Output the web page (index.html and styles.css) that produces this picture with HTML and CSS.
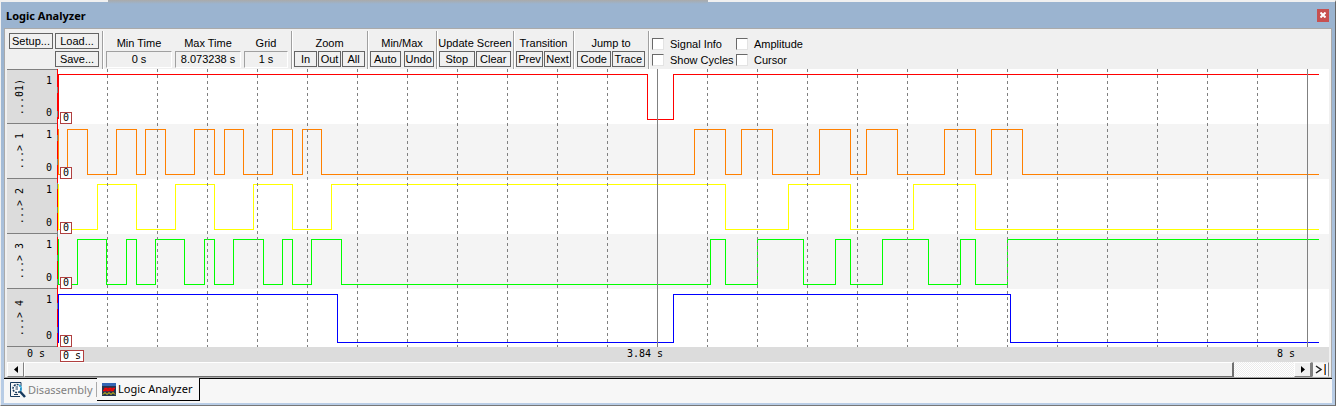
FILE: index.html
```html
<!DOCTYPE html>
<html lang="en">
<head>
<meta charset="utf-8">
<title>Logic Analyzer</title>
<link rel="stylesheet" href="styles.css">
</head>
<body>
<div class="window">
  <header class="titlebar">
    <h1>Logic Analyzer</h1>
    <button class="close" aria-label="Close"><svg width="6" height="6" viewBox="0 0 6 6"><path d="M0.5 0.5 5.5 5.5M5.5 0.5 0.5 5.5" stroke="#fff" stroke-width="2"/></svg></button>
  </header>
  <main class="panel">
    <div class="toolbar">
      <div class="files">
        <button class="setup">Setup...</button><button>Load...</button><button class="save">Save...</button>
      </div>
      <div class="group values">
        <label for="min">Min Time</label><label for="max">Max Time</label><label for="grid">Grid</label>
        <output id="min">0 s</output><output id="max">8.073238 s</output><output id="grid">1 s</output>
      </div>
      <div class="group zoom"><span>Zoom</span><div class="buttons"><button>In</button><button>Out</button><button>All</button></div></div>
      <div class="group minmax"><span>Min/Max</span><div class="buttons"><button>Auto</button><button>Undo</button></div></div>
      <div class="group update"><span>Update Screen</span><div class="buttons"><button>Stop</button><button>Clear</button></div></div>
      <div class="group transition"><span>Transition</span><div class="buttons"><button>Prev</button><button>Next</button></div></div>
      <div class="group jump"><span>Jump to</span><div class="buttons"><button>Code</button><button>Trace</button></div></div>
      <div class="group checks">
        <label><input type="checkbox">Signal Info</label><label><input type="checkbox">Amplitude</label>
        <label><input type="checkbox">Show Cycles</label><label><input type="checkbox">Cursor</label>
      </div>
    </div>
    <div class="scope">
      <div class="signals">
        <div class="signal"><span class="name">...01)</span><span class="levels"><span>1</span><span>0</span></span><span class="tag">0</span></div>
        <div class="signal"><span class="name">...&gt; 1</span><span class="levels"><span>1</span><span>0</span></span><span class="tag">0</span></div>
        <div class="signal"><span class="name">...&gt; 2</span><span class="levels"><span>1</span><span>0</span></span><span class="tag">0</span></div>
        <div class="signal"><span class="name">...&gt; 3</span><span class="levels"><span>1</span><span>0</span></span><span class="tag">0</span></div>
        <div class="signal last"><span class="name">...&gt; 4</span><span class="levels"><span>1</span><span>0</span></span><span class="tag">0</span></div>
      </div>
      <svg class="plot" viewBox="57 69 1272 278" preserveAspectRatio="none" role="img" aria-label="Signal waveforms">
        <path class="band" d="M57 124H1329V179H57ZM57 234H1329V289H57Z"/>
        <path class="wave red" d="M58.5 119V74.5H647.5V119.5H673.5V74.5H1319"/>
        <path class="wave orange" d="M58.5 129V174.5H67.5V129.5H87.5V174.5H116.5V129.5H136.5V174.5H145.5V129.5H165.5V174.5H194.5V129.5H214.5V174.5H224.5V129.5H243.5V174.5H272.5V129.5H292.5V174.5H302.5V129.5H321.5V174.5H694.5V129.5H725.5V174.5H741.5V129.5H772.5V174.5H819.5V129.5H850.5V174.5H866.5V129.5H897.5V174.5H944.5V129.5H975.5V174.5H991.5V129.5H1022.5V174.5H1319"/>
        <path class="wave yellow" d="M58.5 184V229.5H97.5V184.5H136.5V229.5H175.5V184.5H214.5V229.5H253.5V184.5H292.5V229.5H331.5V184.5H725.5V229.5H788.5V184.5H850.5V229.5H913.5V184.5H975.5V229.5H1319"/>
        <path class="wave green" d="M58.5 239V284.5H77.5V239.5H106.5V284.5H126.5V239.5H136.5V284.5H155.5V239.5H184.5V284.5H204.5V239.5H214.5V284.5H233.5V239.5H263.5V284.5H282.5V239.5H292.5V284.5H311.5V239.5H341.5V284.5H710.5V239.5H725.5V284.5H757.5V239.5H803.5V284.5H835.5V239.5H850.5V284.5H882.5V239.5H928.5V284.5H960.5V239.5H975.5V284.5H1007.5V239.5H1319"/>
        <path class="wave blue" d="M58.5 343V294.5H337.5V342.5H673.5V294.5H1010.5V342.5H1319"/>
        <path class="wave grid" d="M107.5 69V347M157.5 69V347M207.5 69V347M257.5 69V347M307.5 69V347M357.5 69V347M407.5 69V347M457.5 69V347M507.5 69V347M557.5 69V347M607.5 69V347M707.5 69V347M757.5 69V347M807.5 69V347M857.5 69V347M907.5 69V347M957.5 69V347M1007.5 69V347M1057.5 69V347M1107.5 69V347M1157.5 69V347M1207.5 69V347M1257.5 69V347"/>
        <path class="wave marker" d="M657.5 69V347M1307.5 69V347M57.5 69V347"/>
        <path class="wave origin" d="M57.5 69V347"/>
      </svg>
    </div>
    <div class="axis"><span class="start">0 s</span><span class="cursor-time">0 s</span><span class="mid">3.84 s</span><span class="end">8 s</span></div>
    <div class="scroll">
      <button class="arrow" aria-label="Scroll left"><svg width="4" height="7" viewBox="0 0 4 7"><path d="M4 0V7L0 3.5Z"/></svg></button>
      <div class="track"><div class="thumb"></div></div>
      <button class="arrow right" aria-label="Scroll right"><svg width="4" height="7" viewBox="0 0 4 7"><path d="M0 0V7L4 3.5Z"/></svg></button>
      <button class="latest" aria-label="Go to end"><svg width="12" height="11" viewBox="0 0 12 11" fill="none"><path d="M1 2 6 5.5 1 9" stroke="#222" stroke-width="1.500"/><path d="M9.5 0V11" stroke="#e08020"/><path d="M10.5 0V11" stroke="#2060b0"/></svg></button>
    </div>
  </main>
  <nav class="tabs">
    <button class="tab inactive"><svg width="16" height="16" viewBox="0 0 16 16" fill="none"><path d="M11 4V.5H.5V14.500H10" stroke="#173a5e"/><circle cx="7" cy="6.500" r="4" fill="#fff" stroke="#173a5e" stroke-width="1.500" stroke-dasharray="2 1"/><path d="M5.500 5H8M5.500 7H8" stroke="#173a5e"/><path d="M9 3Q13 5 10 10" stroke="#35aadd" stroke-width="1.500"/><path d="M10 9.500 15 15" stroke="#173a5e" stroke-width="2.500"/><path d="M4 12.500H8" stroke="#173a5e"/></svg>Disassembly</button>
    <button class="tab active"><svg width="14" height="13" viewBox="0 0 14 13" fill="none"><path d="M0 0H14V13H0Z" fill="#26364f"/><path d="M0 0H14V3H0Z" fill="#3567b5"/><path d="M1 7.500H3V5.500H5V7.500H7V5.500H9V7.500H11V5.500H13" stroke="#f00" stroke-width="1.500"/><path d="M1 11.500 3 9.500 5 11.500 7 9.500 9 11.500 11 9.500 13 11.500" stroke="#ffe000"/></svg>Logic Analyzer</button>
    <div class="tab-rest"></div>
  </nav>
</div>
</body>
</html>
```
FILE: styles.css
```css
* { box-sizing: border-box; }
body { margin: 0; font: 11px/14px "Liberation Sans", Arial, sans-serif; color: #000; background: #f0f0f0; }
button { font: inherit; color: inherit; padding: 0; margin: 0; white-space: nowrap; }
svg { display: block; }

.window {
  display: flex; flex-direction: column; min-height: 100vh;
  border-style: solid; border-width: 2px 1px 1px;
  border-color: #f0f0f0 #666 #777 #f0f0f0;
  background: linear-gradient(#9bb4d0, #9bb4d0 60px, #b9cde6);
  padding: 0 3px 2px;
  position: relative;
}
.window::before {
  content: ""; position: absolute; top: -2px; left: 8%; width: 45%; height: 4px;
  background: linear-gradient(#aaa, #9bb4d0);
}
.titlebar { display: flex; align-items: center; justify-content: space-between; height: 26px; padding: 0 3px 0 2px; }
.titlebar h1 { margin: 2px 0 0; font: bold 11px/16px "Noto Sans", sans-serif; }
.close { display: grid; place-items: center; width: 12px; height: 13px; border: 0; background: #c75050; }
.panel { border: 1px solid #aaa; background: #f0f0f0; padding: 0 2px; }

.toolbar { display: flex; height: 40px; padding-top: 2px; }
.toolbar button { height: 16px; border: 1px solid #646464; background: #f0f0f0; line-height: 14px; }
.files { display: grid; grid-template-columns: 44px 44px; grid-auto-rows: 16px; gap: 2px; padding: 2px 3px 0 2px; }
.save { grid-column: 2; }
.group { border-left: 1px solid #a0a0a0; box-shadow: inset 1px 0 #fff; padding: 5px 2px 0; display: flex; flex-direction: column; align-items: center; gap: 1px; white-space: nowrap; }
.buttons { display: flex; gap: 1px; width: 100%; }
.buttons button { flex: 1; }
.values { display: grid; grid-template-columns: 66px 66px 44px; grid-template-rows: 14px 16px; gap: 1px 3px; text-align: center; width: 189px; padding-left: 3px; }
.values output { border: 1px solid; border-color: #a0a0a0 #fff #fff #a0a0a0; line-height: 15px; }
.zoom { width: 76px; }
.minmax { width: 69px; }
.minmax .buttons { gap: 3px; }
.update { width: 77px; }
.transition { width: 60px; }
.jump { width: 75px; padding: 5px 3px 0; }
.checks { display: grid; grid-template-columns: 84px 84px; grid-template-rows: 16px 16px; gap: 0; padding-left: 3px; justify-items: start; }
.checks label { display: flex; align-items: center; gap: 6px; }
.checks input { appearance: none; width: 12px; height: 12px; margin: 0; background: #fff; border: 1px solid; border-color: #696969 #e3e3e3 #e3e3e3 #696969; }

.scope { display: grid; grid-template-columns: 50px 1fr; background: #fff; font: 10px/12px "DejaVu Sans Mono", monospace; }
.signals { display: grid; grid-template-rows: repeat(4, 55px) 58px; }
.signal { position: relative; display: flex; justify-content: space-between; padding: 5px 5px 4px 7px; background: #dcdcdc; border-bottom: 1px solid #808080; }
.signal:first-child { border-top: 1px solid #808080; }
.signal:nth-child(even) { background: #e6e6e6; }
.name { writing-mode: vertical-rl; transform: rotate(180deg); white-space: pre; align-self: center; }
.levels { display: flex; flex-direction: column; justify-content: space-between; }
.tag, .cursor-time { border: 1px solid #b04040; background: #fff; line-height: 10px; padding: 0 2px; }
.tag { position: absolute; left: 53px; bottom: -1px; z-index: 1; }
.plot { width: 100%; height: 278px; }
.band { fill: #f4f4f4; }
.wave { fill: none; stroke-width: 1; shape-rendering: crispEdges; vector-effect: non-scaling-stroke; }
.red { stroke: #f00; }
.orange { stroke: #ff8000; }
.yellow { stroke: #ff0; }
.green { stroke: #0f0; }
.blue { stroke: #00f; }
.grid { stroke: #808080; stroke-dasharray: 3 3; }
.marker { stroke: #808080; }
.origin { stroke: #f00; stroke-dasharray: 18 6; }

.axis { display: grid; grid-template-columns: 53px 567px 1fr auto; height: 15px; background: #dcdcdc; font: 10px/14px "DejaVu Sans Mono", monospace; padding-right: 34px; }
.start { text-align: right; padding-right: 15px; }
.cursor-time { justify-self: start; margin-top: 3px; }
.scroll { display: flex; height: 15px; background: #f0f0f0; }
.arrow { display: grid; place-items: center; width: 17px; border: 1px solid; border-color: #fff #808080 #808080 #fff; background: #f0f0f0; }
.arrow.right { width: 18px; border-right-width: 2px; }
.track { flex: 1; background: repeating-conic-gradient(#fff 0 25%, #ececec 0 50%) 0 0 / 2px 2px; }
.thumb { width: calc(100% - 60px); height: 100%; background: #f0f0f0; border: 1px solid; border-color: #fff #707070 #707070 #fff; border-right-width: 2px; }
.latest { display: grid; place-items: center; width: 17px; border: 1px solid; border-color: #f0f0f0 #808080 #f0f0f0 #808080; background: #f7f7f7; }

.tabs { flex: 1; display: flex; min-height: 24px; background: #f7f7f7; font: 11px/16px "Noto Sans", sans-serif; }
.tab { display: flex; align-items: center; gap: 2px; height: 23px; border: 0; background: none; }
.inactive { width: 93px; padding-left: 6px; color: #808080; border-top: 1px solid #000; position: relative; }
.inactive::after { content: ""; position: absolute; right: 0; top: 3px; height: 15px; border-right: 1px solid #aaa; }
.active { padding: 0 6px 0 5px; border-right: 1px solid #000; border-bottom: 1px solid #000; }
.tab-rest { flex: 1; border-top: 1px solid #000; }
```
